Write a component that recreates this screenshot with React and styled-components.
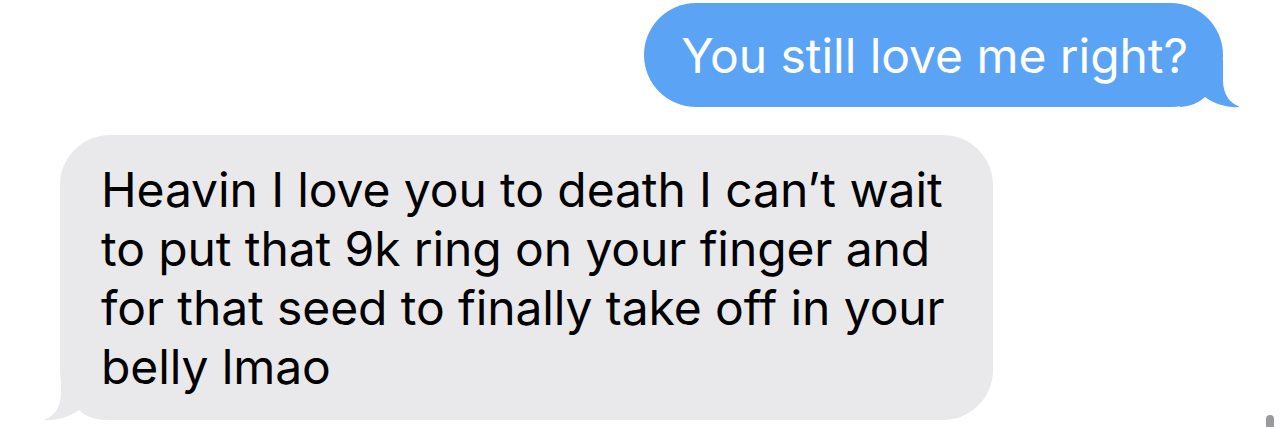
import React from "react";
import styled, { createGlobalStyle } from "styled-components";

const GlobalStyle = createGlobalStyle`
  html, body {
    margin: 0;
    padding: 0;
    background: #ffffff;
    overflow: hidden;
  }
  body {
    font-family: Inter, "Noto Sans", "Liberation Sans", sans-serif;
    -webkit-font-smoothing: antialiased;
  }
`;

const Thread = styled.div`
  position: relative;
  height: 427px;
  display: flex;
  flex-direction: column;
  padding-top: 3px;
  box-sizing: border-box;
`;

const Row = styled.div`
  display: flex;
  justify-content: ${(p) => (p.$out ? "flex-end" : "flex-start")};
  padding: ${(p) => (p.$out ? "0 60px 0 0" : "0 0 0 60px")};
  margin-top: ${(p) => p.$gap || 0}px;
`;

const Bubble = styled.div`
  position: relative;
  box-sizing: border-box;
  background: ${(p) => (p.$out ? "#5ba4f5" : "#e9e9eb")};
  color: ${(p) => (p.$out ? "#ffffff" : "#000000")};
  border-radius: ${(p) => (p.$out ? 52 : 50)}px;
  font-size: 48px;
  line-height: ${(p) => (p.$out ? 58 : 59)}px;
  letter-spacing: ${(p) => (p.$out ? "-0.05px" : "-0.1px")};
  padding: ${(p) => (p.$out ? "24px 35px 22px 37px" : "25px 40px 24px 41px")};
  width: ${(p) => (p.$width ? `${p.$width}px` : "auto")};
  height: ${(p) => (p.$height ? `${p.$height}px` : "auto")};
`;

const Text = styled.span`
  position: relative;
  z-index: 1;
  display: block;
`;

const Tail = styled.svg`
  position: absolute;
  bottom: -1px;
  width: 61px;
  height: 48px;
  ${(p) =>
    p.$out
      ? "right: -18px;"
      : "left: -17px; transform: scaleX(-1);"}
  fill: ${(p) => (p.$out ? "#5ba4f5" : "#e9e9eb")};
`;

const ScrollThumb = styled.div`
  position: absolute;
  right: 9px;
  bottom: -6px;
  width: 8px;
  height: 18px;
  border-radius: 4px;
  background: #9a9a9c;
`;

function MessageTail({ out }) {
  return (
    <Tail $out={out} viewBox="0 0 61 48" aria-hidden="true">
      <path d="M43 0 L43 20 C43 35 50 43 60 47 C48 48 34 44 25 37 C20 42 12 46 0 47 L0 0 Z" />
    </Tail>
  );
}

export default function App() {
  return (
    <>
      <GlobalStyle />
      <Thread>
        <Row $out>
          <Bubble $out $height={104}>
            <Text>You still love me right?</Text>
            <MessageTail out />
          </Bubble>
        </Row>
        <Row $gap={28}>
          <Bubble $width={933} $height={285}>
            <Text>
              Heavin I love you to death I can’t wait to put that 9k ring on
              your finger and for that seed to finally take off in your belly
              lmao
            </Text>
            <MessageTail />
          </Bubble>
        </Row>
        <ScrollThumb />
      </Thread>
    </>
  );
}
